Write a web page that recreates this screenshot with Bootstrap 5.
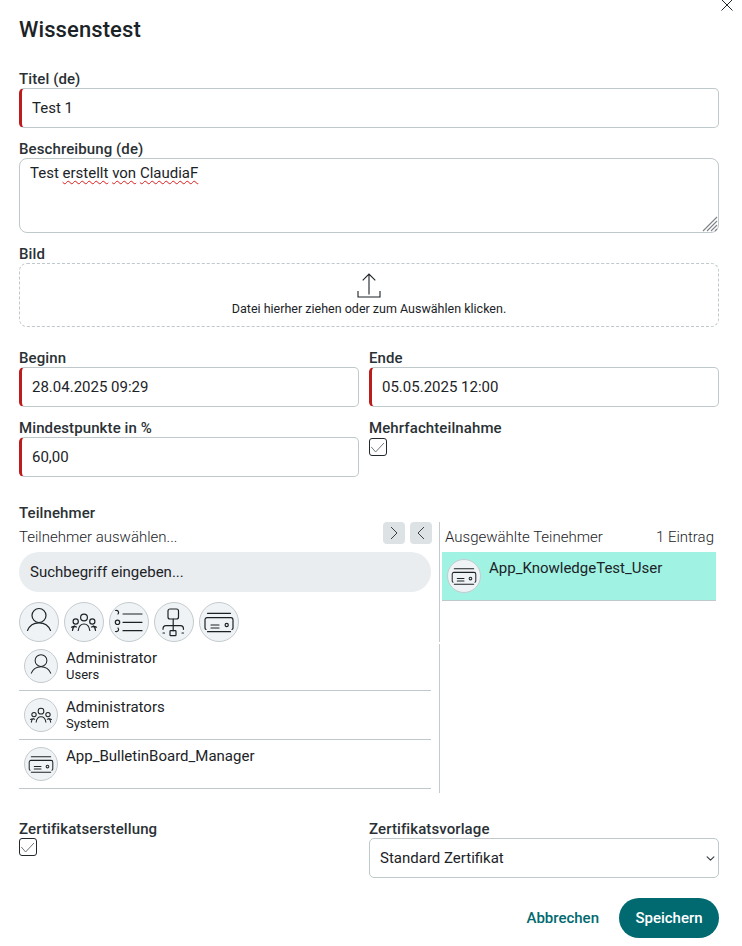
<!doctype html>
<html lang="de">
<head>
<meta charset="utf-8">
<title>Wissenstest</title>
<link href="https://cdn.jsdelivr.net/npm/bootstrap@5.3.0/dist/css/bootstrap.min.css" rel="stylesheet">
<style>
html,body{background:#fff;height:946px;overflow:hidden}
body{font-family:Roboto,"Liberation Sans",sans-serif;font-size:15px;color:#1c2327}
.sheet{position:relative;width:742px;padding:17px 23px 0 19px}
.closer{position:absolute;left:721px;top:-1px;width:12px;height:12px;display:block;background:none;border:0;padding:0}
.closer svg,.box svg{display:block}
.ttl{font-size:22px;letter-spacing:.1px;font-weight:500;line-height:26px;margin:0;color:#1c2327}
.lbl{display:block;font-size:15px;letter-spacing:.1px;font-weight:500;line-height:18px;margin:0;color:#2a3135}
.form-control.fld,.form-select.fld{height:40px;border:1px solid #bfc8ca;border-radius:5px;font-size:15px;line-height:20px;padding:9px 12px;color:#1c2327;box-shadow:none}
.form-control.req{border-left:3px solid #bb1c1c;padding-left:10px}
.note-wrap{position:relative}
.note{height:75px;border:1px solid #bfc8ca;border-radius:8px;font-size:15px;line-height:20px;padding:4px 10px;color:#1c2327}
.grip{position:absolute;right:1px;bottom:1px;display:block}
.wavy{text-decoration:underline wavy #e01b1b 1px;text-underline-offset:2px}
.drop{height:64px;border:1px dashed #bfc8ca;border-radius:8px;font-size:12.5px;line-height:16px;color:#1c2327;padding-top:9px}
.drop-txt{margin-top:3px}
.gut-l{padding-right:10px}
.box{width:18px;height:18px;border:1px solid #22292d;border-radius:3px;display:block;background:#fff}
.box-gap{margin-top:1px}
.pick-left{width:420px;padding-right:7px;padding-bottom:4px}
.pick-line{width:1px;background:linear-gradient(#c4cbce 0 120px,transparent 120px 122px,#c4cbce 122px)}
.pick-right{width:276px;padding-left:2px}
.pick-head{font-size:15px;line-height:20px;font-weight:300;color:#1c2327}
.head-left{height:22px}
.head-txt{margin-top:5px}
.head-right{padding:5px 2px 0 3px}
.arrows{gap:5px}
.arrow{width:22px;height:22px;padding:0;border:0;border-radius:4px;background:#dde3e5;display:flex;align-items:center;justify-content:center}
.search{height:40px;background:#e9edef;border-radius:20px;padding:0 11px;font-size:15px;line-height:40px;color:#1c2327;margin:8px 1px 0 0}
.tools{gap:5px;margin-top:10px}
.disc{border-radius:50%;background:#eff3f5;border:1px solid #c4cbce;display:flex;align-items:center;justify-content:center;flex:none;padding:0}
.disc-lg{width:40px;height:40px}
.disc-sm{width:34px;height:34px}
.disc-lg svg{width:38px;height:38px}
.disc-sm svg{width:32px;height:32px}
.entry{height:49px;border-bottom:1px solid #bfc8ca;padding:7px 0 0 5px;gap:8px;margin-right:1px}
.nm{font-size:15px;line-height:18px}
.sb{font-size:13px;line-height:16px}
.entry-on{background:#a0f2e3;margin:5px 0 0}
.cert-row{margin-top:27px}
.actions{gap:20px;margin-top:20px}
.link-btn{font-size:15px;font-weight:500;color:#006a70;text-decoration:none;padding:0;border:0;background:none}
.save{height:40px;width:100px;border-radius:20px;background:#006a70;border:0;color:#fff;font-size:15px;font-weight:500;padding:0}
.save:hover{background:#006a70;color:#fff}
.form-select.fld{padding:9px 30px 9px 10px;background-position:right 3px center;background-size:9px}
svg .s{fill:none;stroke:#1c2327;stroke-width:1.2;stroke-linecap:round;stroke-linejoin:round}
.gap-lbl{margin-top:12px}
.gap-dates{margin-top:22px}
.gap-title{margin-top:27px}
.gap-part{margin-top:27px}
</style>
</head>
<body>
<svg width="0" height="0" class="position-absolute">
<defs>
<symbol id="i-user" viewBox="0 0 38 38"><circle class="s" cx="19" cy="12.500" r="7"/><path class="s" d="M7.500 27.500C9.500 22.500 13.500 19.800 19 19.800S28.500 22.500 30.500 27.500"/></symbol>
<symbol id="i-group" viewBox="0 0 38 38"><circle class="s" cx="19" cy="14.500" r="3.400"/><circle class="s" cx="10.700" cy="18.500" r="2.600"/><circle class="s" cx="27.300" cy="18.500" r="2.600"/><path class="s" d="M13.200 27.500c.6-4 2.800-6.500 5.800-6.500s5.200 2.500 5.800 6.500M7.500 27.500c.2-1.800 1-3.400 2.300-4.400M6.500 24.200c1.500-.9 3.500-1 5-.2M30.500 27.500c-.2-1.800-1-3.400-2.300-4.400M31.500 24.200c-1.500-.9-3.500-1-5-.2"/></symbol>
<symbol id="i-list" viewBox="0 0 38 38"><path class="s" d="M13 11h19M13 19.300h19M13 27.700h19M5.500 7.500c2.500-.5 4 1.500 2.500 3.500M5.500 28.500c2.500.5 4-1.500 2.500-3.500"/><circle class="s" cx="7.500" cy="19.300" r="2.200"/></symbol>
<symbol id="i-org" viewBox="0 0 38 38"><rect class="s" x="13" y="6" width="10.500" height="10" rx="2"/><path class="s" d="M18.200 16V27.700M8 26.300c0-2 1-3.600 3-3.600h14.500c2 0 3 1.600 3 3.600"/><rect class="s" x="15" y="27.700" width="6" height="5" rx=".8"/><path class="s" d="M8 30h1.500M27 30h1.500"/></symbol>
<symbol id="i-card" viewBox="0 0 38 38"><path class="s" d="M7.500 10.300h23M7.500 28.700h23"/><path class="s" d="M6 26.500c-.7-.3-1-.8-1-1.500v-8c0-1 .7-2.300 2-2.300h24c1.300 0 2 1.300 2 2.300v8c0 .7-.3 1.200-1 1.500"/><path class="s" d="M11 22h8M11 25h8"/><circle class="s" cx="26.700" cy="22" r="1.600"/></symbol>
</defs>
</svg>

<main class="sheet">
<button type="button" class="closer" aria-label="Schließen"><svg width="12" height="12" viewBox="0 0 12 12"><path d="M.5 11.500 11.500.5M.5.5l11 11" stroke="#22292d" stroke-width="1" fill="none"/></svg></button>
<h1 class="ttl">Wissenstest</h1>

<label class="lbl gap-title">Titel (de)</label>
<input class="form-control fld req" value="Test 1">

<label class="lbl gap-lbl">Beschreibung (de)</label>
<div class="note-wrap">
<div class="form-control note">Test <span class="wavy">erstellt</span> <span class="wavy">von</span> <span class="wavy">ClaudiaF</span></div>
<svg class="grip" width="16" height="16" viewBox="0 0 16 16"><path d="M1 15 15 1M5 15 15 5M9 15l6-6M13 15l2-2" stroke="#7d8386" stroke-width="1.100" fill="none"/></svg>
</div>

<label class="lbl gap-lbl">Bild</label>
<div class="drop text-center">
<svg class="d-block mx-auto" width="24" height="25" viewBox="0 0 24 25"><path d="M12 1v20.500M5.700 7.300 12 1l6.300 6.300M1 18V24H23V18" fill="none" stroke="#1c2327" stroke-width="1.100"/></svg>
<div class="drop-txt">Datei hierher ziehen oder zum Auswählen klicken.</div>
</div>

<div class="row g-0 gap-dates">
<div class="col-6 gut-l"><label class="lbl">Beginn</label><input class="form-control fld req" value="28.04.2025 09:29"></div>
<div class="col-6"><label class="lbl">Ende</label><input class="form-control fld req" value="05.05.2025 12:00"></div>
</div>
<div class="row g-0 gap-lbl">
<div class="col-6 gut-l"><label class="lbl">Mindestpunkte in %</label><input class="form-control fld req" value="60,00"></div>
<div class="col-6"><label class="lbl">Mehrfachteilnahme</label>
<span class="box box-gap"><svg width="16" height="16" viewBox="0 0 16 16"><path d="M1.300 8l4.300 5L14 4" fill="none" stroke="#6f777b" stroke-width="1"/></svg></span></div>
</div>

<label class="lbl gap-part">Teilnehmer</label>
<div class="d-flex">
<div class="pick-left">
<div class="d-flex justify-content-between align-items-start pick-head head-left"><span class="head-txt">Teilnehmer auswählen...</span>
<span class="d-flex arrows"><button class="arrow" aria-label="Hinzufügen"><svg width="10" height="14" viewBox="0 0 10 14"><path d="M2 1l6 6-6 6" fill="none" stroke="#3a4246"/></svg></button><button class="arrow" aria-label="Entfernen"><svg width="10" height="14" viewBox="0 0 10 14"><path d="M8 1L2 7l6 6" fill="none" stroke="#3a4246"/></svg></button></span></div>
<div class="search">Suchbegriff eingeben...</div>
<div class="d-flex tools">
<button class="disc disc-lg" aria-label="Benutzer"><svg><use href="#i-user"/></svg></button>
<button class="disc disc-lg" aria-label="Gruppen"><svg><use href="#i-group"/></svg></button>
<button class="disc disc-lg" aria-label="Listen"><svg><use href="#i-list"/></svg></button>
<button class="disc disc-lg" aria-label="Organisation"><svg><use href="#i-org"/></svg></button>
<button class="disc disc-lg" aria-label="Rollen"><svg><use href="#i-card"/></svg></button>
</div>
<div class="d-flex entry"><span class="disc disc-sm"><svg><use href="#i-user"/></svg></span><div><div class="nm">Administrator</div><div class="sb">Users</div></div></div>
<div class="d-flex entry"><span class="disc disc-sm"><svg><use href="#i-group"/></svg></span><div><div class="nm">Administrators</div><div class="sb">System</div></div></div>
<div class="d-flex entry"><span class="disc disc-sm"><svg><use href="#i-card"/></svg></span><div class="nm">App_BulletinBoard_Manager</div></div>
</div>
<div class="pick-line"></div>
<div class="pick-right">
<div class="d-flex justify-content-between pick-head head-right"><span>Ausgewählte Teinehmer</span><span>1 Eintrag</span></div>
<div class="d-flex entry entry-on"><span class="disc disc-sm"><svg><use href="#i-card"/></svg></span><div class="nm">App_KnowledgeTest_User</div></div>
</div>
</div>

<div class="row g-0 cert-row">
<div class="col-6 gut-l"><label class="lbl">Zertifikatserstellung</label>
<span class="box"><svg width="16" height="16" viewBox="0 0 16 16"><path d="M1.300 8l4.300 5L14 4" fill="none" stroke="#6f777b" stroke-width="1"/></svg></span></div>
<div class="col-6"><label class="lbl">Zertifikatsvorlage</label>
<select class="form-select fld"><option>Standard Zertifikat</option></select></div>
</div>

<div class="d-flex justify-content-end align-items-center actions">
<button class="link-btn">Abbrechen</button>
<button class="btn save">Speichern</button>
</div>
</main>
</body>
</html>
